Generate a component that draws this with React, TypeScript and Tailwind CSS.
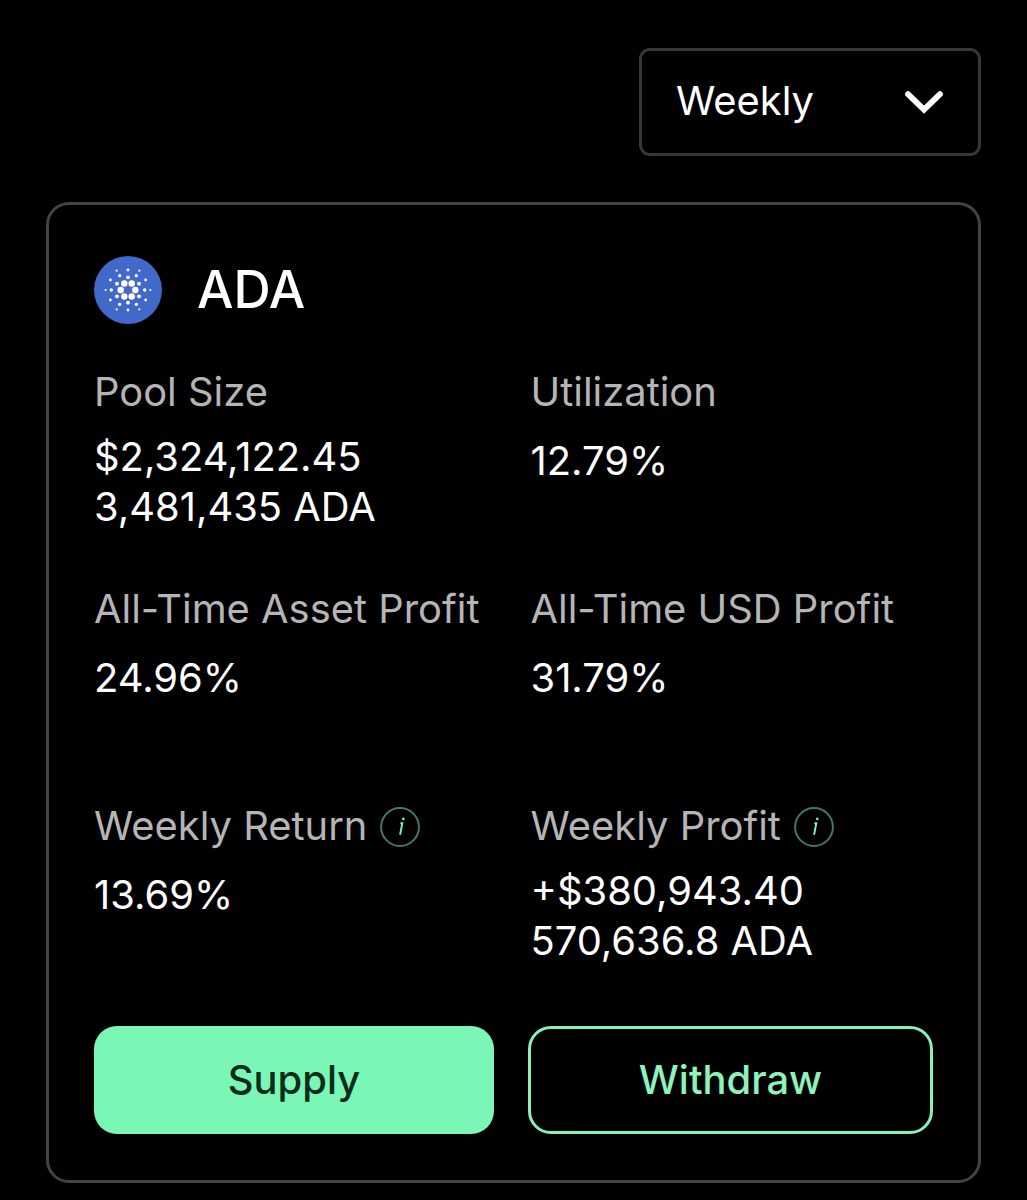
import { useState } from "react";
import clsx from "clsx";

interface Stat {
  label: string;
  values: string[];
  info?: boolean;
}

const STATS: Stat[] = [
  { label: "Pool Size", values: ["$2,324,122.45", "3,481,435 ADA"] },
  { label: "Utilization", values: ["12.79%"] },
  { label: "All-Time Asset Profit", values: ["24.96%"] },
  { label: "All-Time USD Profit", values: ["31.79%"] },
  { label: "Weekly Return", values: ["13.69%"], info: true },
  { label: "Weekly Profit", values: ["+$380,943.40", "570,636.8 ADA"], info: true },
];

// x, y, radius of each dot, measured from the centre of the logo
const ADA_DOTS = [
  [22, 0, 9.6], [-22, 0, 9.6], [11, 19.5, 9.6], [-11, 19.5, 9.6], [11, -19.5, 9.6], [-11, -19.5, 9.6],
  [33, 19, 5.8], [-33, 19, 5.8], [33, -19, 5.8], [-33, -19, 5.8], [0, 38, 5.8], [0, -38, 5.8],
  [50, 0, 5.2], [-50, 0, 5.2], [25, 43, 5], [-25, 43, 5], [25, -43, 5], [-25, -43, 5],
  [53, 30, 4.2], [-53, 30, 4.2], [53, -30, 4.2], [-53, -30, 4.2], [0, 60, 4.2], [0, -60, 4.2],
  [67, 0, 3.2], [-67, 0, 3.2], [34, 58, 3.2], [-34, 58, 3.2], [34, -58, 3.2], [-34, -58, 3.2],
];

function AdaLogo() {
  return (
    <svg viewBox="-102 -102 204 204" className="h-[68px] w-[68px] shrink-0" aria-hidden="true">
      <circle r="102" fill="#4268c9" />
      {ADA_DOTS.map(([x, y, r]) => (
        <circle key={`${x},${y}`} cx={x} cy={y} r={r} fill="#fff" />
      ))}
    </svg>
  );
}

function InfoIcon() {
  return (
    <svg viewBox="0 0 40 40" className="mt-0.5 h-10 w-10 shrink-0" fill="none" aria-hidden="true">
      <circle cx="20" cy="20" r="18.9" stroke="#447a5d" strokeWidth="2" />
      <path d="M20.4 16.2H22.3L20.1 27.8" stroke="#7af7b7" strokeWidth="1.9" />
      <circle cx="23.3" cy="11.9" r="1.3" fill="#7af7b7" />
    </svg>
  );
}

function StatCell({ label, values, info }: Stat) {
  return (
    <div className="h-[169px]">
      <div className="flex h-[57px] items-center gap-[13px] text-[#b5b5b5]">
        <p className="whitespace-nowrap leading-[57px]">{label}</p>
        {info && <InfoIcon />}
      </div>
      <div className={clsx("mt-3 text-white", values.length > 1 ? "leading-[50.4px]" : "leading-[57px]")}>
        {values.map((value) => (
          <p key={value}>{value}</p>
        ))}
      </div>
    </div>
  );
}

export default function App() {
  const [period] = useState("Weekly");

  return (
    <main className="h-[1200px] overflow-hidden bg-black px-[46px] pt-12 font-['Inter',sans-serif] text-[39.9px] text-white">
      <div className="flex justify-end">
        <button
          type="button"
          className="flex h-[108px] w-[342px] items-center justify-between rounded-[11px] border-3 border-[#373737] px-[34px]"
        >
          <span className="-mt-0.5">{period}</span>
          <svg viewBox="0 0 40 26" className="h-[26px] w-10" fill="none" aria-hidden="true">
            <path d="M4 5.2 20 20.6 36 5.2" stroke="#fff" strokeWidth="5.8" strokeLinecap="round" />
          </svg>
        </button>
      </div>

      <section className="mt-[46px] h-[981px] rounded-[23px] border-3 border-[#434343] px-[45px] pt-[51px]">
        <div className="flex h-[68px] items-center gap-[35px]">
          <AdaLogo />
          <h2 className="-mt-0.5 text-[51.5px] leading-[68px] font-medium">ADA</h2>
        </div>

        <div className="mt-[39px] grid grid-cols-[436.5px_1fr] gap-y-12">
          {STATS.map((stat) => (
            <StatCell key={stat.label} {...stat} />
          ))}
        </div>

        <div className="mt-[60px] flex gap-[34px] font-medium">
          <button type="button" className="h-[108px] w-[400px] rounded-[23px] bg-[#7af7b7] text-[#0d2b1b]">
            Supply
          </button>
          <button
            type="button"
            className="h-[108px] w-[405px] rounded-[23px] border-3 border-[#8aefb8] text-[#8df2bc]"
          >
            Withdraw
          </button>
        </div>
      </section>
    </main>
  );
}
